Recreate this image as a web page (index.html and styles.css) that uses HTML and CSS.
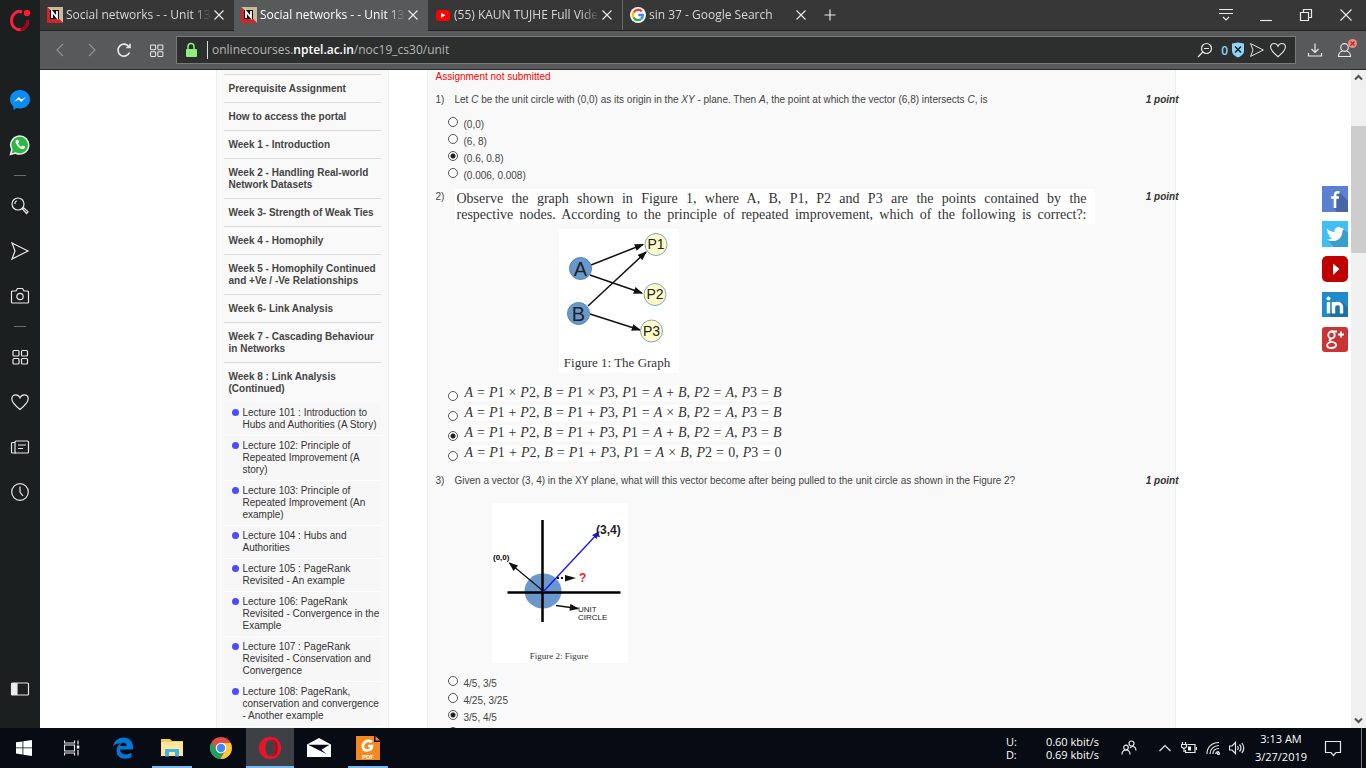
FILE: index.html
```html
<!DOCTYPE html>
<html lang="en">
<head>
<meta charset="utf-8">
<title>Social networks - - Unit 13</title>
<link rel="stylesheet" href="styles.css">
</head>
<body>
<svg class="defs" aria-hidden="true">
  <defs>
    <symbol id="i-close" viewBox="0 0 12 12"><path d="M1.5 1.5l9 9M10.500 1.500l-9 9"/></symbol>
    <symbol id="i-send" viewBox="0 0 20 20"><path d="M2 2l16 8L2 18l3-8z"/></symbol>
    <symbol id="i-heart" viewBox="0 0 20 20"><path d="M10 17.500C5 13.500 1.800 10.500 1.800 6.800 1.800 4.300 3.500 2.800 5.700 2.800c2 0 3.500 1.200 4.300 3 .8-1.800 2.300-3 4.300-3 2.200 0 3.900 1.500 3.900 4C18.200 10.500 15 13.500 10 17.500z"/></symbol>
    <symbol id="i-grid" viewBox="0 0 20 20"><rect x="3" y="3.500" width="6" height="5.500" rx="1"/><rect x="11.500" y="3.500" width="6" height="5.500" rx="1"/><rect x="3" y="11.500" width="6" height="5.500" rx="1"/><rect x="11.500" y="11.500" width="6" height="5.500" rx="1"/></symbol>
    <symbol id="i-nptel" viewBox="0 0 16 16"><path fill="#cdb99a" d="M0 0h16v16z"/><path fill="#d2232a" d="M0 0v16h16z"/><rect x="3" y="3" width="9" height="9" fill="#111"/><path d="M5 11V4.500l5 6V4" fill="none" stroke="#fff" stroke-width="1.800"/></symbol>
    <marker id="m-black" viewBox="0 0 8 6" refX="7" refY="3" markerWidth="10" markerHeight="7" markerUnits="userSpaceOnUse" orient="auto"><path d="M0 0l8 3-8 3z" fill="#111"/></marker>
    <marker id="m-blue" viewBox="0 0 8 6" refX="7" refY="3" markerWidth="8" markerHeight="6" markerUnits="userSpaceOnUse" orient="auto"><path d="M0 0l8 3-8 3z" fill="#1414f0"/></marker>
  </defs>
</svg>

<div class="window">
  <aside class="rail">
    <button class="rail-logo" aria-label="Opera menu"><svg width="24" height="24" viewBox="0 0 24 24"><path d="M14 4.200C9 1.500 3.500 6.500 3.500 12.500S8 22 12.500 21.800c4-.2 7-4 7.200-9.300" fill="none" stroke="#f8223c" stroke-width="3"/><path d="M12.500 21.700c4-.2 7-4 7.200-9.500" fill="none" stroke="#a70014" stroke-width="3"/><circle cx="19" cy="5" r="3.200" fill="#ff1b2d"/></svg></button>
    <button class="rail-btn" aria-label="Messenger"><svg width="22" height="22" viewBox="0 0 22 22"><path d="M11 1C5.300 1 1 5 1 10.300c0 3 1.300 5.500 3.400 7.100V21l3.300-1.900c1 .3 2.100.4 3.300.4 5.700 0 10-4 10-9.200S16.700 1 11 1z" fill="#0a8cf0"/><path d="M5 13l4.800-5 2.600 2.500L17 8l-4.800 5-2.500-2.500z" fill="#fff"/></svg></button>
    <button class="rail-btn" aria-label="WhatsApp"><svg width="22" height="22" viewBox="0 0 22 22"><path d="M1.500 20.500l1.400-5A9 9 0 1 1 6.500 19z" fill="#2cb742" stroke="#eee" stroke-width="1.500"/><path d="M7.800 5.800c-1.800 1-1.700 3 .4 5.600 2.500 3 5.200 4.500 7 3.100 1-.8.900-1.700.6-1.900l-2-1c-.7-.2-1 1.200-1.500 1.100-1.300-.5-2.700-2-3.200-3.200 0-.4 1.200-.9.900-1.700l-.8-1.800c-.2-.4-.9-.4-1.400-.2z" fill="#fff"/></svg></button>
    <span class="rail-dash"></span>
    <button class="rail-btn" aria-label="Search"><svg class="ico" width="20" height="20" viewBox="0 0 20 20"><circle cx="8" cy="8" r="6"/><path d="M4.800 8a3.500 3.500 0 0 1 2-3.200M12.500 13l1.200-1.200 4.300 4-1.500 1.700z"/></svg></button>
    <button class="rail-btn" aria-label="My Flow"><svg class="ico" width="20" height="20"><use href="#i-send"/></svg></button>
    <button class="rail-btn" aria-label="Snapshot"><svg class="ico" width="20" height="20" viewBox="0 0 20 20"><path d="M2.500 5H6l1.500-2.500h5L14 5h3.500a1 1 0 0 1 1 1v10a1 1 0 0 1-1 1h-15a1 1 0 0 1-1-1V6a1 1 0 0 1 1-1z"/><circle cx="10" cy="10.500" r="3.200"/></svg></button>
    <span class="rail-dash"></span>
    <button class="rail-btn" aria-label="Speed dial"><svg class="ico" width="20" height="20"><use href="#i-grid"/></svg></button>
    <button class="rail-btn" aria-label="Bookmarks"><svg class="ico" width="20" height="20"><use href="#i-heart"/></svg></button>
    <button class="rail-btn" aria-label="News"><svg class="ico" width="20" height="20" viewBox="0 0 20 20"><rect x="5" y="4" width="13.500" height="12" rx="1"/><path d="M5 5.500H2.500a1 1 0 0 0-1 1V15a1 1 0 0 0 1 1H6M8 8h8M8 11.500h5"/></svg></button>
    <button class="rail-btn" aria-label="History"><svg class="ico" width="20" height="20" viewBox="0 0 20 20"><circle cx="10" cy="10" r="8.300"/><path d="M10 4.500V10l3 4"/></svg></button>
    <button class="rail-btn rail-end" aria-label="Toggle sidebar"><svg class="ico" width="20" height="20" viewBox="0 0 20 20"><rect x="1.500" y="4" width="17" height="12" rx="1"/><path d="M2 4.500h5v11H2z" fill="#eee"/></svg></button>
  </aside>

  <div class="browser">
    <div class="tabbar" role="tablist">
      <div class="tab"><svg width="16" height="16"><use href="#i-nptel"/></svg><button class="tab-title" role="tab">Social networks - - Unit 13</button><button class="tab-x" aria-label="Close"><svg class="ico" width="12" height="12"><use href="#i-close"/></svg></button></div>
      <div class="tab active"><svg width="16" height="16"><use href="#i-nptel"/></svg><button class="tab-title" role="tab">Social networks - - Unit 13</button><button class="tab-x" aria-label="Close"><svg class="ico" width="12" height="12"><use href="#i-close"/></svg></button></div>
      <div class="tab"><svg width="16" height="16" viewBox="0 0 16 16"><rect x="1" y="3" width="14" height="11" rx="3" fill="#f00"/><path d="M6 5.800v5l4.500-2.500z" fill="#fff"/></svg><button class="tab-title" role="tab">(55) KAUN TUJHE Full Vide</button><button class="tab-x" aria-label="Close"><svg class="ico" width="12" height="12"><use href="#i-close"/></svg></button></div>
      <div class="tab divided"><svg width="16" height="16" viewBox="0 0 16 16"><circle cx="8" cy="8" r="8" fill="#fff"/><g fill="none" stroke-width="2.400"><path d="M11.800 4.300A5 5 0 0 0 3.800 5.400" stroke="#ea4335"/><path d="M3.800 5.200a5 5 0 0 0 0 5.600" stroke="#fbbc05"/><path d="M3.700 10.600a5 5 0 0 0 7.300 1.500" stroke="#34a853"/><path d="M8.200 8h4.600a5 5 0 0 1-1.800 4" stroke="#4285f4"/></g></svg><button class="tab-title" role="tab">sin 37 - Google Search</button><button class="tab-x" aria-label="Close"><svg class="ico" width="12" height="12"><use href="#i-close"/></svg></button></div>
      <button class="tab-new" aria-label="New tab"><svg class="ico" width="12" height="12" viewBox="0 0 12 12"><path d="M6 .5v11M.5 6h11"/></svg></button>
      <div class="winctl">
        <button aria-label="Tab menu"><svg class="ico" width="16" height="16" viewBox="0 0 16 16"><path d="M1 2.500h14M1 6.500h14M5 10l3 3 3-3"/></svg></button>
        <button aria-label="Minimize"><svg class="ico" width="14" height="14" viewBox="0 0 14 14"><path d="M1 12.500h12"/></svg></button>
        <button aria-label="Restore"><svg class="ico" width="14" height="14" viewBox="0 0 14 14"><path d="M1.500 4.500h8v8h-8zM4.500 4.500v-3h8v8h-3"/></svg></button>
        <button aria-label="Close window"><svg class="ico" width="14" height="14" viewBox="0 0 14 14"><path d="M1.500 1.500l11 11M12.500 1.500l-11 11"/></svg></button>
      </div>
    </div>

    <div class="toolbar">
      <button class="tool dim" aria-label="Back"><svg class="ico" width="16" height="16" viewBox="0 0 16 16"><path d="M11 2L5 8l6 6"/></svg></button>
      <button class="tool dim" aria-label="Forward"><svg class="ico" width="16" height="16" viewBox="0 0 16 16"><path d="M5 2l6 6-6 6"/></svg></button>
      <button class="tool" aria-label="Reload"><svg class="ico bold" width="16" height="16" viewBox="0 0 16 16"><path d="M13.500 10.500A6 6 0 1 1 13 4.800M14 1.800v3.700h-3.700"/></svg></button>
      <button class="tool" aria-label="Speed dial"><svg class="ico" width="17" height="17"><use href="#i-grid"/></svg></button>
      <div class="address">
        <svg width="12" height="16" viewBox="0 0 12 16"><path d="M3 7V4.500a3 3 0 0 1 6 0V7" fill="none" stroke="#8fee7f" stroke-width="1.500"/><rect x="1" y="7" width="11" height="8" rx="1" fill="#8fee7f"/></svg>
        <div class="url" role="textbox" aria-label="Address" contenteditable="true" spellcheck="false">onlinecourses.<b>nptel.ac.in</b>/noc19_cs30/unit</div>
        <button aria-label="Zoom"><svg class="ico" width="16" height="16" viewBox="0 0 16 16"><circle cx="9.500" cy="6.500" r="5"/><path d="M7 6.500h5M5.800 10L1 15"/></svg></button>
        <button class="blocked" aria-label="Blocked ads">0<svg width="14" height="16" viewBox="0 0 14 16"><path d="M1 1.500l6-1 6 1V9c0 3-2.500 5-6 6.500C3.500 14 1 12 1 9z" fill="#8fd3fa"/><path d="M4 4.500l6 6M10 4.500l-6 6" stroke="#222" stroke-width="1.500"/></svg></button>
        <button aria-label="My Flow"><svg class="ico" width="16" height="16"><use href="#i-send"/></svg></button>
        <button aria-label="Bookmark"><svg class="ico" width="18" height="18"><use href="#i-heart"/></svg></button>
      </div>
      <button class="tool" aria-label="Downloads"><svg class="ico" width="16" height="16" viewBox="0 0 16 16"><path d="M8 1.500v9M4.500 7L8 10.500 11.500 7M1.500 11v3h13v-3"/></svg></button>
      <button class="tool" aria-label="Profile"><svg class="ico" width="22" height="22" viewBox="0 0 22 22"><circle cx="8.500" cy="8.500" r="3.800"/><path d="M6.500 12C3.500 13 2.500 14 2.500 17.500h12c0-3.500-1-4.500-4-5.500"/><circle cx="16.500" cy="4.500" r="4.500" fill="#f8867c" stroke="none"/><path d="M14.500 2.500l4 4M18.500 2.500l-4 4" stroke="#933"/></svg></button>
    </div>

    <div class="view">
      <div class="page">
        <nav class="course">
          <ul class="weeks">
            <li><a href="#">Prerequisite Assignment</a></li>
            <li><a href="#">How to access the portal</a></li>
            <li><a href="#">Week 1 - Introduction</a></li>
            <li><a href="#">Week 2 - Handling Real-world Network Datasets</a></li>
            <li><a href="#">Week 3- Strength of Weak Ties</a></li>
            <li><a href="#">Week 4 - Homophily</a></li>
            <li><a href="#">Week 5 - Homophily Continued and +Ve / -Ve Relationships</a></li>
            <li><a href="#">Week 6- Link Analysis</a></li>
            <li><a href="#">Week 7 - Cascading Behaviour in Networks</a></li>
            <li><a href="#">Week 8 : Link Analysis (Continued)</a></li>
          </ul>
          <ul class="lectures">
            <li><a href="#">Lecture 101 : Introduction to Hubs and Authorities (A Story)</a></li>
            <li><a href="#">Lecture 102: Principle of Repeated Improvement (A story)</a></li>
            <li><a href="#">Lecture 103: Principle of Repeated Improvement (An example)</a></li>
            <li><a href="#">Lecture 104 : Hubs and Authorities</a></li>
            <li><a href="#">Lecture 105 : PageRank Revisited - An example</a></li>
            <li><a href="#">Lecture 106: PageRank Revisited - Convergence in the Example</a></li>
            <li><a href="#">Lecture 107 : PageRank Revisited - Conservation and Convergence</a></li>
            <li><a href="#">Lecture 108: PageRank, conservation and convergence - Another example</a></li>
          </ul>
        </nav>

        <main class="quiz">
          <p class="status">Assignment not submitted</p>

          <section class="question">
            <span class="num">1)</span>
            <p class="ask">Let <i>C</i> be the unit circle with (0,0) as its origin in the <i>XY</i> - plane. Then <i>A</i>, the point at which the vector (6,8) intersects <i>C</i>, is</p>
            <span class="points">1 point</span>
          </section>
          <div class="options">
            <label><input type="radio" name="q1">(0,0)</label>
            <label><input type="radio" name="q1">(6, 8)</label>
            <label><input type="radio" name="q1" checked>(0.6, 0.8)</label>
            <label><input type="radio" name="q1">(0.006, 0.008)</label>
          </div>

          <section class="question framed">
            <span class="num">2)</span>
            <div class="statement">
              <div>Observe the graph shown in Figure 1, where A, B, P1, P2 and P3 are the points contained by the</div>
              <div>respective nodes. According to the principle of repeated improvement, which of the following is correct?:</div>
            </div>
            <span class="points">1 point</span>
          </section>
          <figure class="fig-graph">
            <svg width="120" height="144" viewBox="0 0 120 144">
              <g stroke="#111" stroke-width="1.500">
                <path d="M32 36L84 15.500" marker-end="url(#m-black)"/><path d="M31 46l52 18" marker-end="url(#m-black)"/><path d="M29 77l58-54" marker-end="url(#m-black)"/><path d="M31 85l50 16" marker-end="url(#m-black)"/>
              </g>
              <g fill="#6a98cc" stroke="#5684b8"><circle cx="21.500" cy="39.500" r="11"/><circle cx="19.500" cy="84.500" r="11"/></g>
              <g fill="#fdfcc8" stroke="#7fa3c4"><circle cx="97" cy="15.500" r="11"/><circle cx="96" cy="65.500" r="11"/><circle cx="92.500" cy="102" r="11"/></g>
              <g class="node big"><text x="21.500" y="47">A</text><text x="19.500" y="92">B</text></g>
              <g class="node"><text x="97" y="20">P1</text><text x="96" y="70">P2</text><text x="92.500" y="107">P3</text></g>
              <text class="caption" x="58" y="138">Figure 1: The Graph</text>
            </svg>
          </figure>
          <div class="options math">
            <label><input type="radio" name="q2"><span><i>A</i> = <i>P</i>1 × <i>P</i>2, <i>B</i> = <i>P</i>1 × <i>P</i>3, <i>P</i>1 = <i>A</i> + <i>B</i>, <i>P</i>2 = <i>A</i>, <i>P</i>3 = <i>B</i></span></label>
            <label><input type="radio" name="q2"><span><i>A</i> = <i>P</i>1 + <i>P</i>2, <i>B</i> = <i>P</i>1 + <i>P</i>3, <i>P</i>1 = <i>A</i> × <i>B</i>, <i>P</i>2 = <i>A</i>, <i>P</i>3 = <i>B</i></span></label>
            <label><input type="radio" name="q2" checked><span><i>A</i> = <i>P</i>1 + <i>P</i>2, <i>B</i> = <i>P</i>1 + <i>P</i>3, <i>P</i>1 = <i>A</i> + <i>B</i>, <i>P</i>2 = <i>A</i>, <i>P</i>3 = <i>B</i></span></label>
            <label><input type="radio" name="q2"><span><i>A</i> = <i>P</i>1 + <i>P</i>2, <i>B</i> = <i>P</i>1 + <i>P</i>3, <i>P</i>1 = <i>A</i> × <i>B</i>, <i>P</i>2 = 0, <i>P</i>3 = 0</span></label>
          </div>

          <section class="question last">
            <span class="num">3)</span>
            <p class="ask">Given a vector (3, 4) in the XY plane, what will this vector become after being pulled to the unit circle as shown in the Figure 2?</p>
            <span class="points">1 point</span>
          </section>
          <figure class="fig-vector">
            <svg width="136" height="160" viewBox="0 0 136 160">
              <ellipse cx="51" cy="88" rx="18.500" ry="17.500" fill="#6a98cc"/>
              <path d="M50.500 17v102M15.500 89.500h113" stroke="#000" stroke-width="2.500"/>
              <path d="M50 87L17.500 60" stroke="#111" stroke-width="1.300" marker-end="url(#m-black)"/>
              <path d="M51 89L107 29" stroke="#1414f0" stroke-width="1.300" marker-end="url(#m-blue)"/>
              <path d="M65 75h8" stroke="#111" stroke-width="2" stroke-dasharray="2 2"/><path d="M73 72l11 3-11 3.500z" fill="#111"/>
              <path d="M64 102.500l22 3" stroke="#111" stroke-width="1.300" marker-end="url(#m-black)"/>
              <text class="lbl-big" x="104" y="31">(3,4)</text>
              <text class="lbl-small" x="1" y="57">(0,0)</text>
              <text class="lbl-ask" x="87" y="79">?</text>
              <text class="lbl" x="86" y="109">UNIT</text><text class="lbl" x="86" y="117">CIRCLE</text>
              <text class="caption small" x="67" y="156">Figure 2: Figure</text>
            </svg>
          </figure>
          <div class="options">
            <label><input type="radio" name="q3">4/5, 3/5</label>
            <label><input type="radio" name="q3">4/25, 3/25</label>
            <label><input type="radio" name="q3" checked>3/5, 4/5</label>
            <label><input type="radio" name="q3">3/25, 4/25</label>
          </div>
        </main>
      </div>

      <div class="share">
        <a href="#" aria-label="Facebook"><svg width="26" height="26" viewBox="0 0 26 26"><path fill="#5b80d2" d="M0 0h26v26H0z"/><path fill="#4866a5" d="M17 6l9 9v11H15l-3-4z"/><path d="M17.500 6.500c-3.500-.8-4.500.5-4.500 3V22M9 11.500h8" fill="none" stroke="#fff" stroke-width="2.600"/></svg></a>
        <a href="#" aria-label="Twitter"><svg width="26" height="26" viewBox="0 0 26 26"><path fill="#40bff5" d="M0 0h26v26H0z"/><path fill="#389fcd" d="M20 7l6 5v14H12l-6-6z"/><path fill="#fff" d="M5 7.500c2 2.200 4.500 3.500 7.600 3.600-.5-3.300 2-5 4-5 1.200 0 2 .4 2.700 1.200l2.300-.9-1.300 2 1.800-.4-1.700 1.900c.2 5.700-3.800 10.100-9.400 10.100-2.300 0-4.200-.6-6-1.600 2 .1 3.700-.4 5-1.500-1.600-.2-2.800-1.100-3.200-2.500h1.400c-1.700-.6-2.700-1.900-2.800-3.600l1.500.4C5.200 10.200 4.300 9.300 5 7.500z"/></svg></a>
        <a href="#" aria-label="YouTube"><svg width="26" height="26" viewBox="0 0 26 26"><rect width="26" height="26" rx="5" fill="#c00000"/><path d="M11 7.500v11.500l6.500-6z" fill="#fff"/></svg></a>
        <a href="#" aria-label="LinkedIn"><svg width="26" height="26" viewBox="0 0 26 26"><path fill="#208bc9" d="M0 1h26v25H0z"/><path fill="#1c73a6" d="M19 10l7 7v9H9l-4-4z"/><circle cx="6.500" cy="7.500" r="2" fill="#fff"/><path d="M6.500 11v11.500M11.500 22.500V11M11.500 16c0-4.500 8-5 8 0v6.500" fill="none" stroke="#fff" stroke-width="3.400"/></svg></a>
        <a href="#" aria-label="Google Plus"><svg width="26" height="26" viewBox="0 0 26 26"><rect y="1" width="26" height="25" rx="3" fill="#cb3437"/><g fill="none" stroke="#fff" stroke-width="1.800"><ellipse cx="9.500" cy="9" rx="3.200" ry="3.500"/><path d="M9 5.500h6M9 12.500c-3 2-1 3 1.500 3.500 6 1.500 4 6-1 6-5.500 0-6-4.500-.5-6M19 5.500v6M16 8.500h6"/></g></svg></a>
      </div>
      <div class="scroll" aria-hidden="true">
        <svg width="15" height="16" viewBox="0 0 15 16"><path d="M4 9.500L7.500 6 11 9.500" fill="none" stroke="#505050" stroke-width="2"/></svg>
        <span class="thumb"></span>
        <svg class="down" width="15" height="16" viewBox="0 0 15 16"><path d="M4 6.500L7.500 10 11 6.500" fill="none" stroke="#505050" stroke-width="2"/></svg>
      </div>
    </div>
  </div>
</div>

<footer class="taskbar">
  <button aria-label="Start"><svg width="16" height="16" viewBox="0 0 16 16" fill="#fff"><path d="M0 2.300l6.500-.9v6.100H0zM7.300 1.300L16 0v7.500H7.300zM0 8.300h6.500v6.200L0 13.600zM7.300 8.300H16V16l-8.700-1.300z"/></svg></button>
  <button aria-label="Task view"><svg class="ico" width="16" height="16" viewBox="0 0 16 16"><path d="M.5.500v2.500h10V.5M.5 5h10v6H.500zM.5 15.500V13h10v2.500M14 .5v4M14 10v5.500"/><path d="M12.800 5.500h2.500v3h-2.500z" fill="#fff" stroke="none"/></svg></button>
  <div class="apps">
    <button aria-label="Edge"><svg width="22" height="22" viewBox="0 0 22 22"><path fill="#0078d7" d="M1 9.500C2 4 6 .5 11.500.5 17.500.5 21 4.500 21 10v2.500H8c.2 6 8 5.700 11.500 3.300V20c-5 3-15 2.800-15-6.500C4.500 10 6.500 7.500 9 6.300 5.500 6.300 2.500 7.500 1 9.500zM8.200 9h6.500c0-4.500-6-4.300-6.500 0z"/></svg></button>
    <button class="open" aria-label="File Explorer"><svg width="22" height="20" viewBox="0 0 22 20"><path fill="#f5cd50" d="M0 1h9l2 2h11v4H0z"/><path fill="#ffe69a" d="M0 4h22v14H0z"/><path fill="#3fb3e8" d="M4 18.500V11h14v7.500h-4V14H8v4.500z"/></svg></button>
    <button aria-label="Chrome"><svg width="22" height="22" viewBox="0 0 22 22"><circle cx="11" cy="11" r="11" fill="#dd4f43"/><path d="M1.500 5.500A11 11 0 0 0 10 22l5-8.500H7z" fill="#1da261"/><path d="M10.500 22A11 11 0 0 0 20.700 6H11l4.500 7z" fill="#fcc934"/><circle cx="11" cy="11" r="5.300" fill="#fff"/><circle cx="11" cy="11" r="4.200" fill="#4285f4"/></svg></button>
    <button class="open current" aria-label="Opera"><svg width="24" height="24" viewBox="0 0 24 24"><path fill-rule="evenodd" fill="#e5152b" d="M12 .8a11.200 11.200 0 1 0 0 22.400A11.200 11.200 0 0 0 12 .8zM12 4c3 0 4.500 3.700 4.500 8S15 20 12 20s-4.500-3.700-4.500-8S9 4 12 4z"/><path fill="#a81020" d="M13 4.200c5-2 7 3 7 7.800s-2 9.500-7 7.800c2.500-1 3.500-4 3.500-7.800S15.500 5.200 13 4.200z"/></svg></button>
    <button aria-label="Mail"><svg width="24" height="20" viewBox="0 0 24 20"><path fill="#fff" d="M0 6.500L12 0l12 6.500V19H0z"/><path fill="#070b13" d="M1 6.800h21.500l-8 5 5 4.200z"/></svg></button>
    <button class="open" aria-label="Foxit PDF"><svg width="24" height="24" viewBox="0 0 24 24"><path fill="#f5891f" d="M0 0h18v6h6v18H0z"/><path fill="#f5891f" d="M19.500 0v4.500H24z"/><path d="M16 6c-5-3-10 1-9 5.500S16 15 16 10h-4" fill="none" stroke="#fff" stroke-width="2.600"/><text class="pdf" x="12" y="23">PDF</text></svg></button>
  </div>
  <div class="tray">
    <dl class="net"><dt>U:</dt><dd>0.60 kbit/s</dd><dt>D:</dt><dd>0.69 kbit/s</dd></dl>
    <button class="people" aria-label="People"><svg class="ico" width="16" height="16" viewBox="0 0 16 16"><circle cx="10.500" cy="3.500" r="2.500"/><circle cx="5" cy="7.500" r="2.300"/><path d="M1 14.500c0-6 8-6 8 0M9 8c3-3 6-1 6 2.500"/></svg></button>
    <button aria-label="Hidden icons"><svg class="ico" width="14" height="14" viewBox="0 0 14 14"><path d="M1.500 10L7 4.500l5.500 5.500"/></svg></button>
    <button aria-label="Battery"><svg class="ico" width="16" height="14" viewBox="0 0 16 14"><path d="M6.500 3.500H14v8H4.500V9M15.500 6v3M1.500 1v2M4.500 1v2M.5 3.500h5v2.500l-2.500 1.500L.5 6zM3 8v3"/><path d="M7 5.500h3v4H7z" fill="#fff" stroke="none"/></svg></button>
    <button aria-label="Wi-Fi"><svg class="ico" width="14" height="14" viewBox="0 0 14 14"><path d="M1 13C1 6 6 1.500 13 1.500M4 13c0-5 4-8.500 9-8.500M7 13c0-3.500 2.500-5.500 6-5.500M9.800 13c0-1.500 1.200-2.500 3.200-2.500"/><circle cx="12.500" cy="12.500" r="1"/></svg></button>
    <button aria-label="Volume"><svg class="ico" width="16" height="14" viewBox="0 0 16 14"><path d="M.5 5h2.500L6.500 1.500v11L3 9H.500zM8.500 5q1.500 2 0 4M10.500 3.500q3 3.500 0 7M12.800 2q4 5 0 10"/></svg></button>
    <div class="clock"><time>3:13 AM</time><time>3/27/2019</time></div>
    <button class="notes" aria-label="Notifications"><svg class="ico" width="18" height="18" viewBox="0 0 18 18"><path d="M1.500 2.500h15v11H12l-2.500 3-2.500-3H1.500z"/></svg></button>
  </div>
</footer>
</body>
</html>
```

FILE: styles.css
```css
* { box-sizing: border-box; }

body {
  margin: 0;
  height: 100vh;
  display: flex;
  flex-direction: column;
  overflow: hidden;
  background: #fff;
  font-family: "Open Sans", "Noto Sans", sans-serif;
}

button {
  display: flex;
  align-items: center;
  justify-content: center;
  padding: 0;
  border: 0;
  background: none;
  color: inherit;
  font: inherit;
}

svg { display: block; flex: none; }
.defs { position: absolute; width: 0; height: 0; }
.ico { fill: none; stroke: #e8e8e8; stroke-width: 1.2; }
.ico.bold { stroke-width: 1.6; }

.window { flex: 1; min-height: 0; display: flex; }

/* Left rail */
.rail {
  width: 40px;
  display: flex;
  flex-direction: column;
  align-items: center;
  padding-bottom: 17px;
  background: #1b1f1f;
}
.rail-logo { height: 40px; margin-bottom: 37px; }
.rail-btn { width: 40px; height: 45px; }
.rail-dash { width: 12px; height: 1px; margin: 8px 0 7px; background: #666a6a; }
.rail-end { margin-top: auto; }

.browser { flex: 1; min-width: 0; display: flex; flex-direction: column; }

/* Tabs */
.tabbar {
  display: flex;
  height: 31px;
  background: #373737;
  border-bottom: 1px solid #222;
  color: #d6d6d6;
  font-size: 12px;
}
.tab {
  width: 194px;
  display: flex;
  align-items: center;
  gap: 2px;
  padding: 0 9px 0 7px;
}
.tab.active { background: #58595b; color: #fff; box-shadow: 0 1px #58595b; }
.tab.divided { border-left: 1px solid #6a6a6a; }
.tab-title {
  flex: 1;
  min-width: 0;
  justify-content: flex-start;
  padding-left: 1px;
  overflow: hidden;
  white-space: nowrap;
  line-height: 20px;
  mask-image: linear-gradient(to right, #000 88%, transparent);
}
.tab-x { width: 12px; height: 16px; }
.tab-new { width: 28px; }
.winctl { margin-left: auto; display: flex; }
.winctl button { width: 40px; }

/* Toolbar */
.toolbar {
  height: 39px;
  display: flex;
  align-items: center;
  padding: 0 3px 0 4px;
  background: #58595b;
  border-bottom: 1px solid #2b2b2b;
}
.tool { width: 32px; height: 32px; }
.tool.dim { opacity: 0.4; }
.address {
  flex: 1;
  height: 28px;
  display: flex;
  align-items: center;
  gap: 4px;
  margin: 0 3px 0 4px;
  padding: 0 8px;
  border: 1px solid #787979;
  background: #2c2f2e;
  color: #e8e8e8;
}
.url {
  flex: 1;
  margin-left: 6px;
  padding-left: 4px;
  border-left: 1px solid #ddd;
  outline: 0;
  color: #b4b6b6;
  font-size: 12px;
  line-height: 18px;
  white-space: nowrap;
}
.url b { color: #fff; font-weight: 600; }
.blocked { gap: 3px; margin-left: 4px; color: #8fd3fa; font-size: 12px; font-weight: 600; }

/* Page viewport */
.view {
  position: relative;
  flex: 1;
  min-height: 0;
  display: flex;
  overflow: hidden;
  background: #fff;
}
.page {
  flex: 1;
  max-width: 960px;
  margin: 0 auto;
  display: grid;
  grid-template-columns: 173px 1fr;
  column-gap: 38px;
  color: #444;
  font: 10px/12px "Liberation Sans", Arial, sans-serif;
}
.page a { color: inherit; text-decoration: none; }

.course {
  padding: 4px 7px 0;
  border: solid #eee;
  border-width: 0 1px;
  background: #f9f9f9;
}
.weeks, .lectures { margin: 0; padding: 0; list-style: none; }
.weeks li {
  padding: 8px 4px 7px 5px;
  border-top: 1px solid #ddd;
  font-weight: bold;
}
.lectures { padding-top: 1px; }
.lectures li {
  position: relative;
  padding: 4px 0 4px 19px;
  border-bottom: 1px solid #fff;
  background: #f7f7f7;
  color: #333;
}
.lectures li::before {
  content: "";
  position: absolute;
  left: 8px;
  top: 6px;
  width: 7px;
  height: 7px;
  border-radius: 50%;
  background: #4b4bff;
}

.quiz {
  min-width: 0;
  padding: 1px 0 0 8px;
  border: solid #eee;
  border-width: 0 1px;
  background: #f9f9f9;
}
.status { margin: 0; color: #f00; }
.question {
  display: grid;
  grid-template-columns: 19px 1fr auto;
  align-items: start;
  margin: 11px -4px 0 0;
}
.ask { margin: 0; }
.points { color: #333; font-weight: bold; font-style: italic; }
.framed { margin-top: 6px; }
.framed .num, .framed .points { padding-top: 2px; }
.last { margin-top: 10px; }
.statement {
  justify-self: start;
  width: 640px;
  max-width: 100%;
  padding: 2px 8px 1px 2px;
  background: #fff;
  color: #333;
  font: 14px/16px "Liberation Serif", "Times New Roman", serif;
}
.statement div { text-align: justify; text-align-last: justify; white-space: nowrap; }

.options { display: flex; flex-direction: column; margin: 9px 0 0 12px; }
.options label {
  display: flex;
  align-items: flex-start;
  gap: 6px;
  height: 17px;
  padding-top: 2px;
  line-height: 15px;
}
.options input {
  appearance: none;
  width: 10px;
  height: 10px;
  margin: 0;
  border: 1px solid #555;
  border-radius: 50%;
  background: #fff;
}
.options input:checked { background: radial-gradient(circle, #222 0 2px, #fff 3px); }
.math { margin-top: 12px; }
.math label { height: 20px; padding: 0; }
.math input { margin-top: 6px; }
.math span {
  width: 320px;
  height: 16px;
  padding: 0 2px 0 1px;
  background: #fff;
  color: #333;
  font: 14px/16px "Liberation Serif", "Times New Roman", serif;
  text-align-last: justify;
  white-space: nowrap;
}

figure { margin: 0; }
figure svg { background: #fff; }
.fig-graph { margin: 5px 0 0 123px; }
.fig-vector { margin: 16px 0 0 56px; }
.fig-vector + .options { margin-top: 11px; }
.node, .caption { text-anchor: middle; }
.node { font-size: 14px; fill: #222; }
.node.big { font-size: 20px; }
.caption { font: 13px "Liberation Serif", serif; fill: #333; }
.caption.small { font-size: 9px; }
.lbl { font-size: 8px; fill: #222; }
.lbl-small { font-size: 8px; font-weight: bold; }
.lbl-big { font-size: 12px; font-weight: bold; fill: #222; }
.lbl-ask { font-size: 12px; font-weight: bold; fill: #e22; }

/* Floating share buttons */
.share {
  position: absolute;
  top: 116px;
  right: 18px;
  display: flex;
  flex-direction: column;
  gap: 9px;
}

.scroll { width: 15px; display: flex; flex-direction: column; background: #f0f0f0; }
.thumb { height: 127px; margin-top: 40px; background: #cdcdcd; }
.down { margin-top: auto; }

/* Taskbar */
.taskbar {
  height: 40px;
  display: flex;
  background: #070b13;
  color: #fff;
  font-size: 11px;
}
.taskbar > button, .apps button { width: 48px; height: 40px; }
.apps { display: flex; gap: 1px; margin-left: 3px; }
.apps .open {
  background: linear-gradient(#76b9ed, #76b9ed) center bottom / 40px 2px no-repeat;
}
.apps .current {
  background: linear-gradient(#76b9ed, #76b9ed) center bottom / 48px 2px no-repeat #3d4045;
}
.pdf { font: bold 6px "Liberation Sans", sans-serif; fill: #fff; text-anchor: middle; }
.tray {
  margin-left: auto;
  display: flex;
  align-items: center;
  padding-right: 4px;
}
.tray button { width: 24px; height: 40px; }
.net {
  display: grid;
  grid-template-columns: 40px auto;
  margin: 0;
  line-height: 13px;
}
.net dd { margin: 0; }
.tray .people { width: 32px; margin: 0 8px 0 14px; }
.clock {
  width: 64px;
  display: flex;
  flex-direction: column;
  text-align: center;
  line-height: 18px;
}
.tray .notes { width: 49px; border-right: 1px solid #777; padding-right: 8px; }
```
